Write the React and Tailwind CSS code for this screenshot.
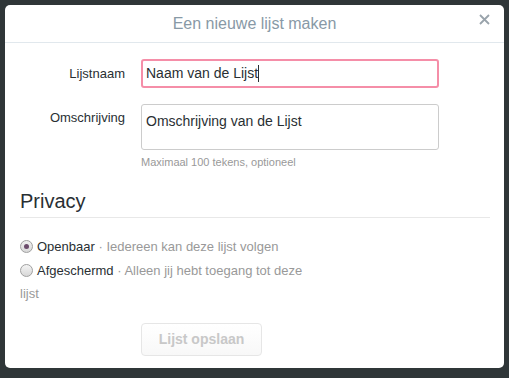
export default function App() {
  return (
    <div className="w-[509px] h-[378px] bg-[#2f3638] pt-[5px] pl-[5px] overflow-hidden" style={{ fontFamily: '"Liberation Sans", Arial, sans-serif' }}>
      <div className="w-[499px] h-[363px] bg-white rounded-[5px] flex flex-col">
        <div className="h-[38px] border-b border-[#e1e8ed] flex items-center justify-center relative shrink-0">
          <span className="text-[16px] text-[#8899a6]">Een nieuwe lijst maken</span>
          <span className="absolute right-[14px] top-[9px] text-[#8899a6]">
            <svg width="11" height="11" viewBox="0 0 11 11"><path d="M1 1L10 10M10 1L1 10" stroke="#99a3ab" strokeWidth="1.8" /></svg>
          </span>
        </div>
        <div className="pt-[16px] flex flex-col">
          <div className="flex items-start">
            <div className="w-[120px] text-right text-[13px] text-[#292f33] pt-[5px]">Lijstnaam</div>
            <div className="ml-[16px] w-[298px] h-[29px] border-2 border-[#f58ea8] rounded-[3px] flex items-center px-[3px] text-[14px] text-[#292f33]">
              Naam van de Lijst<span className="w-px h-[17px] bg-[#292f33]" />
            </div>
          </div>
          <div className="flex items-start mt-[16px]">
            <div className="w-[120px] text-right text-[13px] text-[#292f33] pt-[4px]">Omschrijving</div>
            <div className="ml-[16px] flex flex-col">
              <div className="w-[298px] h-[46px] border border-[#cccccc] rounded-[3px] px-[4px] pt-[6px] text-[14px] text-[#292f33]">Omschrijving van de Lijst</div>
              <div className="text-[11px] text-[#999999] mt-[5px] leading-[14px]">Maximaal 100 tekens, optioneel</div>
            </div>
          </div>
        </div>
        <div className="px-[15px] mt-[19px]">
          <div className="text-[20px] text-[#292f33] pb-[2px] border-b border-[#e8e8e8] leading-[27px] w-[470px]">Privacy</div>
          <div className="mt-[17px] w-[290px] text-[13px] leading-[23px]">
            <div className="flex items-center">
              <span className="w-[13px] h-[13px] rounded-full border border-[#a0a0a0] bg-gradient-to-b from-[#f0f0f0] to-[#d8d8d8] flex items-center justify-center mr-[4px] shrink-0">
                <span className="w-[5px] h-[5px] rounded-full bg-[#6b4b6b]" />
              </span>
              <span className="text-[#292f33]">Openbaar</span>
              <span className="text-[#999999]">&nbsp;· Iedereen kan deze lijst volgen</span>
            </div>
            <div className="mt-[1px]">
              <span className="inline-block align-[-2px] w-[13px] h-[13px] rounded-full border border-[#a0a0a0] bg-gradient-to-b from-[#f4f4f4] to-[#d8d8d8] mr-[4px]" />
              <span className="text-[#292f33]">Afgeschermd</span>
              <span className="text-[#999999]"> · Alleen jij hebt toegang tot deze lijst</span>
            </div>
          </div>
        </div>
        <div className="pl-[136px] mt-[18px]">
          <div className="w-[121px] h-[33px] border border-[#e6e6e6] rounded-[4px] bg-gradient-to-b from-white to-[#f8f8f8] flex items-center justify-center text-[14px] font-bold text-[#c8c8c8]">Lijst opslaan</div>
        </div>
      </div>
    </div>
  );
}
